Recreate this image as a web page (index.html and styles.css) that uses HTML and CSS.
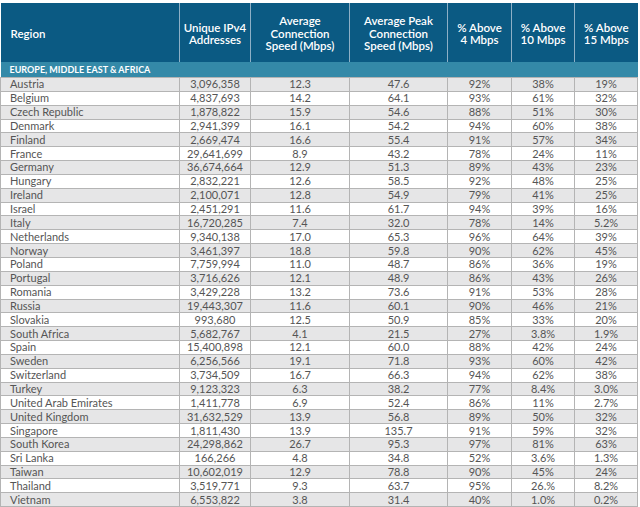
FILE: index.html
```html
<!DOCTYPE html>
<html>
<head>
<meta charset="utf-8">
<link rel="stylesheet" href="styles.css">
</head>
<body>
<table class="speed-table">
  <colgroup>
    <col class="c-region"><col class="c-ipv4"><col class="c-avg"><col class="c-peak"><col class="c-p4"><col class="c-p10"><col class="c-p15">
  </colgroup>
  <thead>
    <tr class="head-row">
      <th class="h-region">Region</th>
      <th>Unique IPv4<br>Addresses</th>
      <th>Average<br>Connection<br>Speed (Mbps)</th>
      <th>Average Peak<br>Connection<br>Speed (Mbps)</th>
      <th>% Above<br>4 Mbps</th>
      <th>% Above<br>10 Mbps</th>
      <th>% Above<br>15 Mbps</th>
    </tr>
  </thead>
  <tbody>
    <tr class="section-row"><td colspan="7">EUROPE, MIDDLE EAST &amp; AFRICA</td></tr>
    <tr class="shade"><td>Austria</td><td>3,096,358</td><td>12.3</td><td>47.6</td><td>92%</td><td>38%</td><td>19%</td></tr>
    <tr><td>Belgium</td><td>4,837,693</td><td>14.2</td><td>64.1</td><td>93%</td><td>61%</td><td>32%</td></tr>
    <tr class="shade"><td>Czech Republic</td><td>1,878,822</td><td>15.9</td><td>54.6</td><td>88%</td><td>51%</td><td>30%</td></tr>
    <tr><td>Denmark</td><td>2,941,399</td><td>16.1</td><td>54.2</td><td>94%</td><td>60%</td><td>38%</td></tr>
    <tr class="shade"><td>Finland</td><td>2,669,474</td><td>16.6</td><td>55.4</td><td>91%</td><td>57%</td><td>34%</td></tr>
    <tr><td>France</td><td>29,641,699</td><td>8.9</td><td>43.2</td><td>78%</td><td>24%</td><td>11%</td></tr>
    <tr class="shade"><td>Germany</td><td>36,674,664</td><td>12.9</td><td>51.3</td><td>89%</td><td>43%</td><td>23%</td></tr>
    <tr><td>Hungary</td><td>2,832,221</td><td>12.6</td><td>58.5</td><td>92%</td><td>48%</td><td>25%</td></tr>
    <tr class="shade"><td>Ireland</td><td>2,100,071</td><td>12.8</td><td>54.9</td><td>79%</td><td>41%</td><td>25%</td></tr>
    <tr><td>Israel</td><td>2,451,291</td><td>11.6</td><td>61.7</td><td>94%</td><td>39%</td><td>16%</td></tr>
    <tr class="shade"><td>Italy</td><td>16,720,285</td><td>7.4</td><td>32.0</td><td>78%</td><td>14%</td><td>5.2%</td></tr>
    <tr><td>Netherlands</td><td>9,340,138</td><td>17.0</td><td>65.3</td><td>96%</td><td>64%</td><td>39%</td></tr>
    <tr class="shade"><td>Norway</td><td>3,461,397</td><td>18.8</td><td>59.8</td><td>90%</td><td>62%</td><td>45%</td></tr>
    <tr><td>Poland</td><td>7,759,994</td><td>11.0</td><td>48.7</td><td>86%</td><td>36%</td><td>19%</td></tr>
    <tr class="shade"><td>Portugal</td><td>3,716,626</td><td>12.1</td><td>48.9</td><td>86%</td><td>43%</td><td>26%</td></tr>
    <tr><td>Romania</td><td>3,429,228</td><td>13.2</td><td>73.6</td><td>91%</td><td>53%</td><td>28%</td></tr>
    <tr class="shade"><td>Russia</td><td>19,443,307</td><td>11.6</td><td>60.1</td><td>90%</td><td>46%</td><td>21%</td></tr>
    <tr><td>Slovakia</td><td>993,680</td><td>12.5</td><td>50.9</td><td>85%</td><td>33%</td><td>20%</td></tr>
    <tr class="shade"><td>South Africa</td><td>5,682,767</td><td>4.1</td><td>21.5</td><td>27%</td><td>3.8%</td><td>1.9%</td></tr>
    <tr><td>Spain</td><td>15,400,898</td><td>12.1</td><td>60.0</td><td>88%</td><td>42%</td><td>24%</td></tr>
    <tr class="shade"><td>Sweden</td><td>6,256,566</td><td>19.1</td><td>71.8</td><td>93%</td><td>60%</td><td>42%</td></tr>
    <tr><td>Switzerland</td><td>3,734,509</td><td>16.7</td><td>66.3</td><td>94%</td><td>62%</td><td>38%</td></tr>
    <tr class="shade"><td>Turkey</td><td>9,123,323</td><td>6.3</td><td>38.2</td><td>77%</td><td>8.4%</td><td>3.0%</td></tr>
    <tr><td>United Arab Emirates</td><td>1,411,778</td><td>6.9</td><td>52.4</td><td>86%</td><td>11%</td><td>2.7%</td></tr>
    <tr class="shade"><td>United Kingdom</td><td>31,632,529</td><td>13.9</td><td>56.8</td><td>89%</td><td>50%</td><td>32%</td></tr>
    <tr><td>Singapore</td><td>1,811,430</td><td>13.9</td><td>135.7</td><td>91%</td><td>59%</td><td>32%</td></tr>
    <tr class="shade"><td>South Korea</td><td>24,298,862</td><td>26.7</td><td>95.3</td><td>97%</td><td>81%</td><td>63%</td></tr>
    <tr><td>Sri Lanka</td><td>166,266</td><td>4.8</td><td>34.8</td><td>52%</td><td>3.6%</td><td>1.3%</td></tr>
    <tr class="shade"><td>Taiwan</td><td>10,602,019</td><td>12.9</td><td>78.8</td><td>90%</td><td>45%</td><td>24%</td></tr>
    <tr><td>Thailand</td><td>3,519,771</td><td>9.3</td><td>63.7</td><td>95%</td><td>26.%</td><td>8.2%</td></tr>
    <tr class="shade"><td>Vietnam</td><td>6,553,822</td><td>3.8</td><td>31.4</td><td>40%</td><td>1.0%</td><td>0.2%</td></tr>
  </tbody>
</table>
</body>
</html>
```
FILE: styles.css
```css
html, body {
  margin: 0;
  padding: 0;
  background: #ffffff;
}
body {
  padding-top: 3px;
  font-family: "Lato", "Liberation Sans", sans-serif;
}
.speed-table {
  border-collapse: collapse;
  table-layout: fixed;
  width: 637px;
}
.c-region { width: 179px; }
.c-ipv4 { width: 71px; }
.c-avg { width: 99px; }
.c-peak { width: 98px; }
.c-p4 { width: 64px; }
.c-p10 { width: 63px; }
.c-p15 { width: 63px; }

.head-row th {
  background: #0b5a83;
  color: #ffffff;
  font-weight: 600;
  font-size: 11.5px;
  line-height: 12.5px;
  height: 56px;
  padding: 3px 2px 0;
  text-align: center;
  vertical-align: middle;
  border-left: 1px solid #8eb0c6;
  border-right: 1px solid #8eb0c6;
  border-top: 0;
  border-bottom: 0;
}
.head-row th:first-child { border-left: 0; }
.head-row th:last-child { border-right: 0; }
.head-row th.h-region {
  text-align: left;
  padding-left: 10px;
}
.section-row td {
  background: #3489a8;
  color: #ffffff;
  font-weight: 700;
  font-size: 9px;
  height: 15px;
  padding: 0 0 0 10px;
  text-align: left;
  line-height: 12px;
  border: 0;
}
tbody tr {
  height: 13.85px;
}
tbody td {
  font-size: 11px;
  line-height: 12px;
  color: #555555;
  background: #ffffff;
  padding: 0;
  text-align: center;
  border: 1px solid #b4b4b4;
  white-space: nowrap;
}
tbody td:first-child {
  text-align: left;
  padding-left: 9px;
}
tbody tr.shade td {
  background: #e6e6e7;
}
```
